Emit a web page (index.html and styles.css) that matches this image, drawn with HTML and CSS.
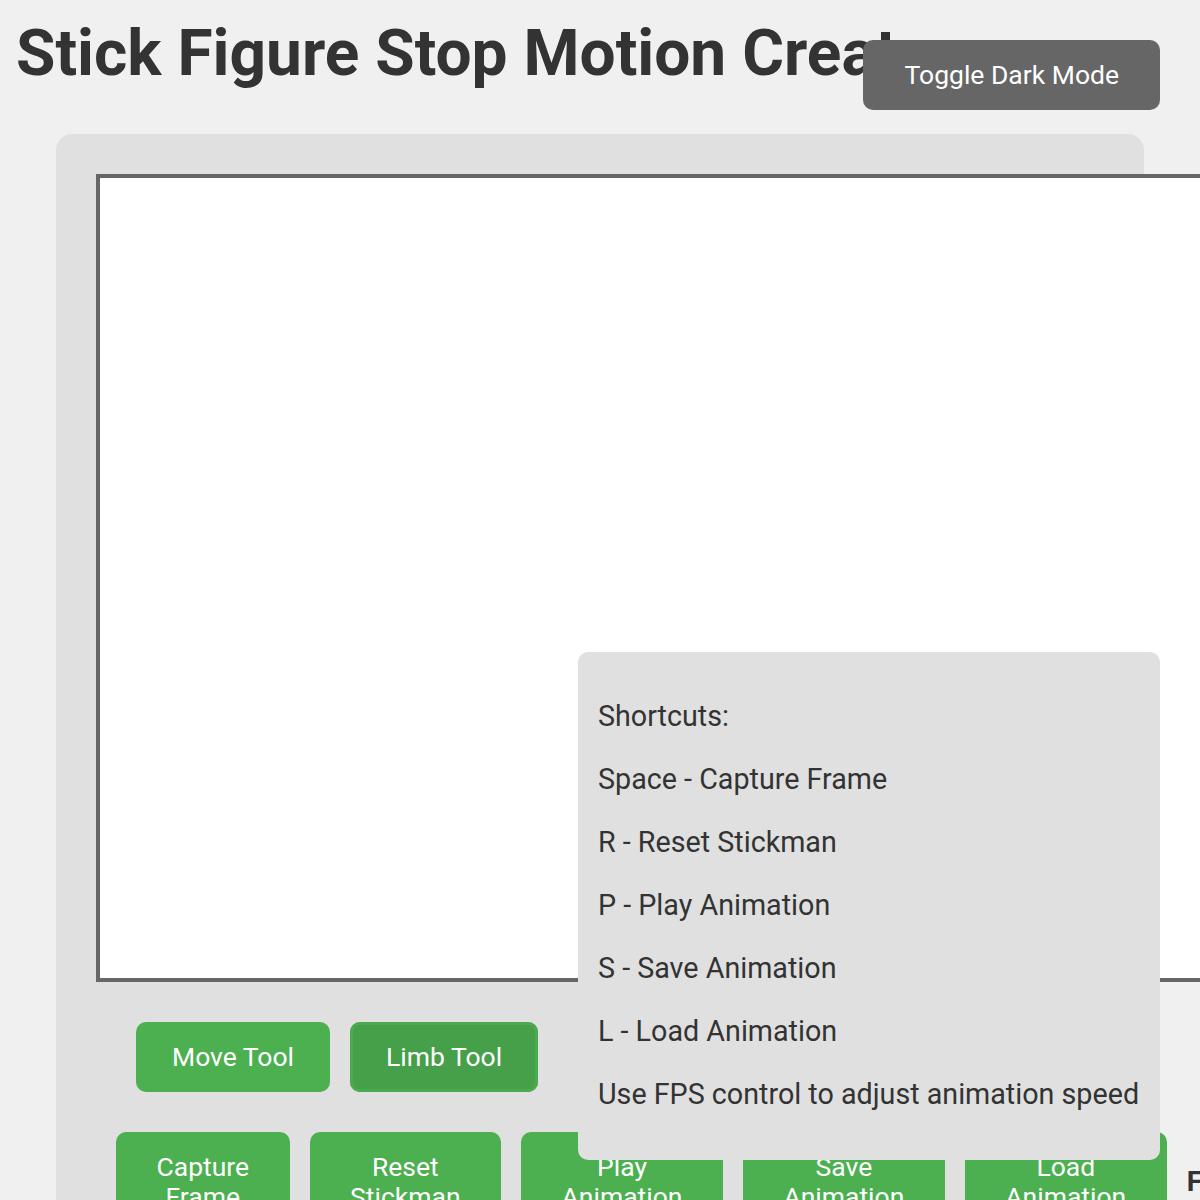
FILE: index.html
```html
<!DOCTYPE html>
<html lang="en">
<head>
<meta charset="utf-8">
<title>Stick Figure Stop Motion Creator</title>
<link rel="stylesheet" href="styles.css">
</head>
<body>
<h1 class="title">Stick Figure Stop Motion Creator</h1>
<button class="theme-toggle">Toggle Dark Mode</button>
<div class="container">
  <div class="canvas"></div>
  <div class="tools">
    <button class="btn tool">Move Tool</button>
    <button class="btn tool active">Limb Tool</button>
  </div>
  <div class="actions">
    <button class="btn narrow">Capture Frame</button>
    <button class="btn narrow">Reset Stickman</button>
    <button class="btn narrow">Play Animation</button>
    <button class="btn narrow">Save Animation</button>
    <button class="btn narrow">Load Animation</button>
    <label class="fps">FPS: <input class="fps-input" type="number" value="12"></label>
  </div>
</div>
<div class="shortcuts">
  <p>Shortcuts:</p>
  <p>Space - Capture Frame</p>
  <p>R - Reset Stickman</p>
  <p>P - Play Animation</p>
  <p>S - Save Animation</p>
  <p>L - Load Animation</p>
  <p>Use FPS control to adjust animation speed</p>
</div>
</body>
</html>
```
FILE: styles.css
```css
html {
  background: #f0f0f0;
  overflow: hidden;
}
body {
  margin: 0;
  padding: 16px;
  width: 1400px;
  font-family: Roboto, "Liberation Sans", sans-serif;
  color: #333;
}
.title {
  margin: 0 0 43px;
  font-size: 64px;
  font-weight: 700;
  color: #333;
  line-height: 75px;
  white-space: nowrap;
}
.theme-toggle {
  position: fixed;
  top: 40px;
  right: 40px;
  padding: 20px 41px;
  font-family: Roboto, sans-serif;
  font-size: 26.5px;
  line-height: 30px;
  color: #fff;
  background: #666;
  border: none;
  border-radius: 10px;
}
.container {
  width: 1008px;
  margin: 0 40px;
  padding: 40px;
  background: #e0e0e0;
  border-radius: 16px;
}
.canvas {
  width: 1200px;
  height: 800px;
  background: #fff;
  border: 4px solid #666;
}
.tools {
  display: flex;
  gap: 20px;
  margin: 40px 0 0 40px;
}
.actions {
  display: flex;
  align-items: center;
  gap: 20px;
  margin: 40px 0 0 20px;
}
.btn {
  flex: none;
  padding: 20px 40.5px;
  font-family: Roboto, sans-serif;
  font-size: 26.5px;
  line-height: 30px;
  color: #fff;
  background: #4caf50;
  border: none;
  border-radius: 10px;
}
.btn.tool {
  padding: 20px 36px;
}
.btn.active {
  background: #45a049;
  box-shadow: inset 0 0 0 3px #4aab4e;
}
.btn.narrow {
  width: min-content;
}
.fps {
  flex: none;
  font-size: 28px;
  font-weight: 700;
  white-space: nowrap;
}
.fps-input {
  width: 100px;
  font-size: 26px;
}
.shortcuts {
  position: fixed;
  right: 40px;
  bottom: 40px;
  width: 542px;
  padding: 18px 20px 20px;
  background: #e0e0e0;
  border-radius: 10px;
  font-size: 28.7px;
  line-height: 34px;
  color: #333;
}
.shortcuts p {
  margin: 29px 0;
  white-space: nowrap;
}
```
